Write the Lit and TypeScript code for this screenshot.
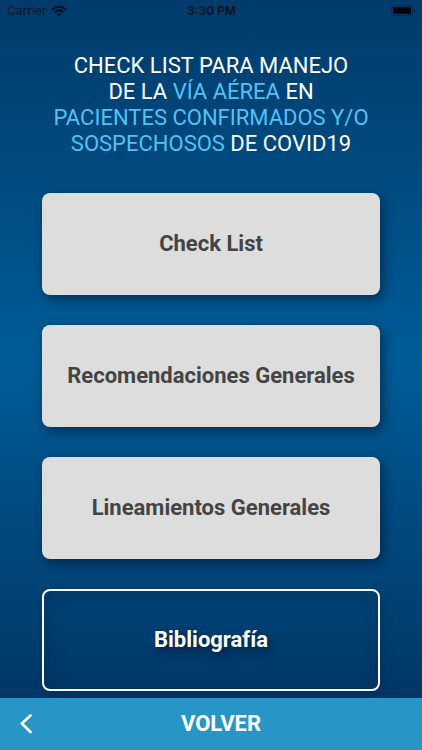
import { LitElement, html, css } from "lit";
import { customElement, property } from "lit/decorators.js";

@customElement("status-bar")
class StatusBar extends LitElement {
  static styles = css`
    :host {
      display: grid;
      grid-template-columns: 1fr auto 1fr;
      align-items: center;
      height: 22px;
      padding: 0 6px 0 7px;
      font: 12px/16px Inter, "Liberation Sans", sans-serif;
      color: #031222;
    }
    .carrier {
      display: flex;
      align-items: center;
      gap: 5px;
    }
    .time {
      font-weight: 600;
    }
    .battery {
      justify-self: end;
    }
    svg {
      display: block;
    }
  `;

  render() {
    return html`
      <span class="carrier">
        Carrier
        <svg width="16" height="12" viewBox="0 0 16 12" fill="none" stroke="currentColor" aria-hidden="true">
          <path d="M1 4.6a10 10 0 0 1 14 0" stroke-width="2.2" />
          <path d="M3.6 7.2a6.3 6.3 0 0 1 8.8 0" stroke-width="2.1" />
          <path d="M8 11.6 5.6 9.2a3.4 3.4 0 0 1 4.8 0z" fill="currentColor" stroke="none" />
        </svg>
      </span>
      <span class="time">3:30 PM</span>
      <svg class="battery" width="25" height="12" viewBox="0 0 25 12" aria-hidden="true">
        <rect x="0.5" y="0.5" width="21" height="10" rx="3" fill="none" stroke="#031222" stroke-opacity=".45" />
        <rect x="2" y="2" width="18" height="7" rx="1.6" fill="#00060d" />
        <path d="M23 4v3.4c1.3-.4 1.3-3 0-3.4z" fill="#031222" fill-opacity=".5" />
      </svg>
    `;
  }
}

@customElement("menu-card")
class MenuCard extends LitElement {
  @property() label = "";
  @property({ type: Boolean }) outlined = false;

  static styles = css`
    :host {
      display: block;
    }
    .card {
      display: block;
      box-sizing: border-box;
      width: 100%;
      min-height: 102px;
      padding: 8px 16px;
      border: 0;
      border-radius: 8px;
      background: #dddddd;
      color: #444444;
      font: 700 22px/28px Roboto, sans-serif;
      text-align: center;
      box-shadow: 3px 4px 12px rgba(0, 20, 45, 0.6);
      cursor: pointer;
    }
    .outlined {
      border: 2px solid #ffffff;
      background: transparent;
      color: #ffffff;
      box-shadow: 3px 4px 12px rgba(0, 20, 45, 0.2), inset 3px 4px 20px rgba(0, 20, 45, 0.2);
      text-shadow: 3px 4px 8px rgba(0, 15, 35, 0.7);
    }
  `;

  render() {
    return html`<button type="button" class="card ${this.outlined ? "outlined" : ""}">${this.label}</button>`;
  }
}

@customElement("app-root")
class AppRoot extends LitElement {
  static styles = css`
    :host {
      display: flex;
      flex-direction: column;
      min-height: 100vh;
      background: linear-gradient(#003b6b, #005c97 48%, #003767 93%);
      font-family: Roboto, sans-serif;
    }
    .content {
      flex: 1;
      display: flex;
      flex-direction: column;
      padding: 31px 42px 7px;
    }
    .title {
      margin: 0 0 36px;
      color: #ffffff;
      font-size: 22px;
      line-height: 26px;
      font-weight: 400;
      text-align: center;
      white-space: nowrap;
    }
    .accent {
      color: #56c0f5;
    }
    .menu {
      display: flex;
      flex-direction: column;
      gap: 30px;
    }
    .back {
      display: grid;
      grid-template-columns: 52px 1fr 32px;
      align-items: center;
      height: 52px;
      padding: 0;
      border: 0;
      background: #2796c6;
      color: #ffffff;
      font: 700 22px/28px Roboto, sans-serif;
      cursor: pointer;
    }
    .chevron {
      justify-self: center;
    }
  `;

  render() {
    return html`
      <status-bar></status-bar>
      <main class="content">
        <h1 class="title">
          CHECK LIST PARA MANEJO<br />
          DE LA <span class="accent">VÍA AÉREA</span> EN<br />
          <span class="accent">PACIENTES CONFIRMADOS Y/O<br />SOSPECHOSOS</span> DE COVID19
        </h1>
        <nav class="menu">
          <menu-card label="Check List"></menu-card>
          <menu-card label="Recomendaciones Generales"></menu-card>
          <menu-card label="Lineamientos Generales"></menu-card>
          <menu-card label="Bibliografía" outlined></menu-card>
        </nav>
      </main>
      <button type="button" class="back">
        <svg class="chevron" width="12" height="20" viewBox="0 0 12 20" fill="none" stroke="currentColor" stroke-width="2.6" stroke-linecap="round" stroke-linejoin="round" aria-hidden="true">
          <path d="M10.500 1.500 1.800 9.500l8.700 8.500" />
        </svg>
        <span>VOLVER</span>
      </button>
    `;
  }
}
